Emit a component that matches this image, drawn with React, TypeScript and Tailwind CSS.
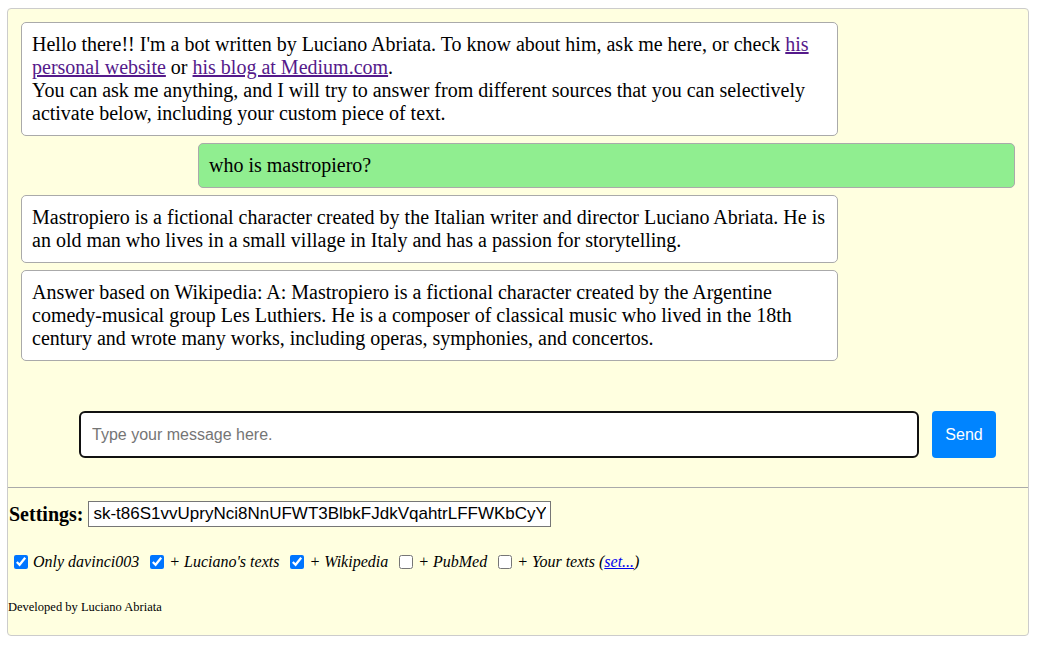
const serif = { fontFamily: '"Liberation Serif", "Times New Roman", serif' };
const sans = { fontFamily: '"Liberation Sans", Arial, sans-serif' };

function Bubble({ children, user }: { children: React.ReactNode; user?: boolean }) {
  return (
    <div
      className={`w-[817px] rounded-[5px] border border-[#aaa] px-[10px] py-[10px] text-[20px] leading-[23px] text-black ${
        user ? "self-end bg-[#90ee90]" : "bg-white"
      }`}
    >
      {children}
    </div>
  );
}

const options = [
  { label: "Only davinci003", checked: true },
  { label: "+ Luciano's texts", checked: true },
  { label: "+ Wikipedia", checked: true },
  { label: "+ PubMed", checked: false },
];

export default function App() {
  return (
    <div className="min-h-screen bg-white pt-[8px] pl-[7px]" style={serif}>
      <div className="w-[1022px] rounded-[4px] border border-[#ccc] bg-[#ffffe0]">
        <div className="flex flex-col gap-[7px] px-[13px] pt-[13px]">
          <Bubble>
            Hello there!! I'm a bot written by Luciano Abriata. To know about him, ask me here, or check{" "}
            <a href="#" className="text-[#551a8b] underline">his personal website</a> or{" "}
            <a href="#" className="text-[#551a8b] underline">his blog at Medium.com</a>.
            <br />
            You can ask me anything, and I will try to answer from different sources that you can selectively
            activate below, including your custom piece of text.
          </Bubble>
          <Bubble user>who is mastropiero?</Bubble>
          <Bubble>
            Mastropiero is a fictional character created by the Italian writer and director Luciano Abriata. He is
            an old man who lives in a small village in Italy and has a passion for storytelling.
          </Bubble>
          <Bubble>
            Answer based on Wikipedia: A: Mastropiero is a fictional character created by the Argentine
            comedy-musical group Les Luthiers. He is a composer of classical music who lived in the 18th century
            and wrote many works, including operas, symphonies, and concertos.
          </Bubble>
        </div>

        <div className="mt-[50px] flex items-center gap-[13px] pl-[71px]">
          <input
            type="text"
            placeholder="Type your message here."
            className="h-[47px] w-[840px] rounded-[6px] border-2 border-[#111] bg-white px-[11px] text-[16px] text-black outline-none placeholder:text-[#757575]"
            style={sans}
          />
          <button
            type="button"
            className="h-[47px] w-[64px] rounded-[4px] bg-[#0084ff] text-[16px] text-white"
            style={sans}
          >
            Send
          </button>
        </div>

        <hr className="mt-[29px] border-t border-[#aaa]" />

        <div className="mt-[11px] flex items-center gap-[5px] pl-[1px]">
          <span className="text-[20px] font-bold">Settings:</span>
          <input
            type="text"
            defaultValue="sk-t86S1vvUpryNci8NnUFWT3BlbkFJdkVqahtrLFFWKbCyYG"
            className="h-[26px] w-[463px] border border-[#767676] bg-white px-[4px] text-[17px] text-black outline-none"
            style={sans}
          />
        </div>

        <div className="mt-[21px] flex items-center pl-[2px] text-[16px] italic">
          {options.map((o) => (
            <label key={o.label} className="mr-[7px] flex items-center">
              <input
                type="checkbox"
                defaultChecked={o.checked}
                className="my-[3px] mr-[3px] ml-[4px] h-[14px] w-[14px] accent-[#0075ff]"
              />
              <span className="ml-[2px]">{o.label}</span>
            </label>
          ))}
          <label className="flex items-center">
            <input type="checkbox" className="my-[3px] mr-[3px] ml-[4px] h-[14px] w-[14px]" />
            <span className="ml-[2px]">
              + Your texts (<a href="#" className="text-[#0000ee] underline">set...</a>)
            </span>
          </label>
        </div>

        <p className="mt-[24px] pb-[18px] text-[12.5px]">Developed by Luciano Abriata</p>
      </div>
    </div>
  );
}
